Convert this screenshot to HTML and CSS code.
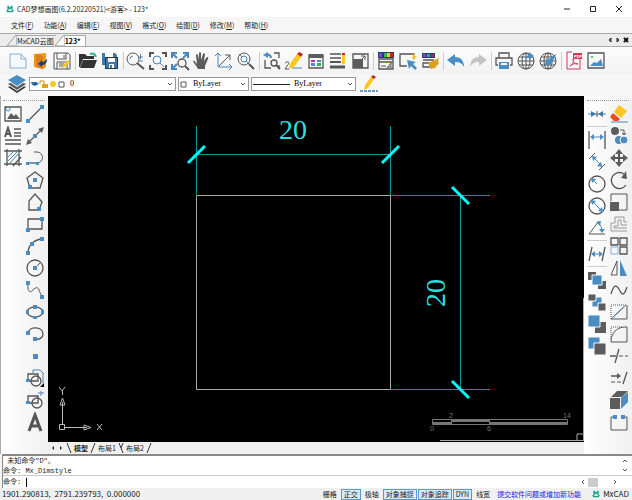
FILE: index.html
```html
<!DOCTYPE html>
<html lang="zh-CN">
<head>
  <meta charset="UTF-8">
  <meta name="viewport" content="width=device-width, initial-scale=1.0">
  <title>CAD梦想画图</title>
  <link rel="stylesheet" href="styles.css">
</head>
<body>
  <div class="app">
    <header class="titlebar">
      <svg class="logo" viewBox="0 0 12 12"><path d="M2 1l2 0 2 3 2-3h2v6H8V5L6 7 4 5v3H2zM0 8h3l1 1h4l2-2 2 1-2 3H2z"/></svg>
      <span class="title">CAD梦想画图(6.2.20220521)&lt;游客&gt; - 123*</span>
      <button class="window-button" aria-label="最小化"><svg viewBox="0 0 8 8"><path d="M1 4h6"/></svg></button>
      <button class="window-button" aria-label="最大化"><svg viewBox="0 0 8 8"><path d="M1.5 1.5h5v5h-5z"/></svg></button>
      <button class="window-button" aria-label="关闭"><svg viewBox="0 0 8 8"><path d="M1 1l6 6M7 1L1 7"/></svg></button>
    </header>

    <nav class="menubar">
      <button>文件(<u>F</u>)</button>
      <button>功能(<u>A</u>)</button>
      <button>编辑(<u>E</u>)</button>
      <button>视图(<u>V</u>)</button>
      <button>格式(<u>O</u>)</button>
      <button>绘图(<u>D</u>)</button>
      <button>修改(<u>M</u>)</button>
      <button>帮助(<u>H</u>)</button>
    </nav>

    <div class="doc-tabs">
      <svg class="slant" viewBox="0 0 10 12"><path d="M0 12L8 2l2-1v11z"/></svg>
      <button class="doc-tab">MxCAD云图</button>
      <svg class="slant active" viewBox="0 0 10 12"><path d="M0 12L8 2l2-1v11z"/></svg>
      <button class="doc-tab active">123*</button>
      <div class="doc-nav">
        <button aria-label="上一个"><svg viewBox="0 0 6 6"><path d="M4 1v4L2 3z"/></svg></button>
        <button aria-label="下一个"><svg viewBox="0 0 6 6"><path d="M2 1v4l2-2z"/></svg></button>
        <button aria-label="关闭文档"><svg viewBox="0 0 6 6"><path class="bold" d="M1 1l4 4M5 1L1 5"/></svg></button>
      </div>
    </div>

    <div class="toolbar main-tools">
      <button class="tool" aria-label="新建"><svg viewBox="0 0 20 20"><path class="pale" d="M2 3h11l5 5v9H2zM13 3v5h5"/></svg></button>
      <button class="tool" aria-label="打开图库"><svg viewBox="0 0 20 20"><path class="orange" d="M4 3l12-1v14l-3 2-9-2z"/><path class="brown" d="M6 3l7 2v13l-7-2z"/><path class="navy" d="M17 8c0 4-2 6-5 6v2l-4-3 4-4v2c2 0 3-1 5-3z"/></svg></button>
      <button class="tool" aria-label="另存为"><svg viewBox="0 0 20 20"><path d="M2 2h14l2 2v14H2zM5 2v6h9V2M5 18v-7h10v7M12 4v3M7 13h5M7 15h4"/><path class="yellow" d="M10 17l1-3 5-5 2 2-5 5z"/></svg></button>
      <i class="sep"></i>
      <button class="tool" aria-label="打开"><svg viewBox="0 0 20 20"><path class="dark" d="M1 3h6l2 2h7v3H5l-3 8H1zM5 9h14l-3 8H2z"/><path class="green-line" d="M12 3c3-1 5 0 6 3"/></svg></button>
      <button class="tool" aria-label="保存"><svg viewBox="0 0 20 20"><path class="steel" d="M2 2h13l2 2v10H2z"/><path class="white" d="M5 2h8v4H5z"/><path class="dark" d="M5 6h13v12H5z"/><path class="steel" d="M6 7h11v10H6z"/><path class="white" d="M8 7h7v4H8zM9 13h5v4H9z"/><path class="steel" d="M10 14h2v3h-2z"/></svg></button>
      <i class="sep"></i>
      <button class="tool" aria-label="缩放"><svg viewBox="0 0 20 20"><circle cx="7" cy="8" r="6"/><path class="thick" d="M11 12l7 6"/><path class="blue-line" d="M12 6h5M14.500 3v5M13 10h4M4 8a3 3 0 0 1 3-3"/></svg></button>
      <button class="tool" aria-label="窗口缩放"><svg viewBox="0 0 20 20"><path class="thick" d="M2 6V2h4M14 2h4v4M18 14v4h-4M6 18H2v-4"/><circle class="blue-line" cx="9" cy="9" r="4"/><path class="blue-line" d="M12 12l4 4"/></svg></button>
      <button class="tool" aria-label="范围缩放"><svg viewBox="0 0 20 20"><path class="blue-line fatter" d="M2 7V2h5M2 2l5 5M13 2h5v5M18 2l-5 5M2 13v5h5M2 18l5-5"/><circle class="heavy" cx="12" cy="12" r="4"/><path class="thick" d="M15 15l4 4"/></svg></button>
      <button class="tool" aria-label="平移"><svg viewBox="0 0 20 20"><path class="gray" d="M6 18c-1-3-4-5-5-8 1-1 2 0 4 3L4 4c0-1 2-1 2 0l1 5V2c0-1 2-1 2 0v7l2-6c0-1 2-1 2 0l-1 7 3-4c1 0 2 0 1 2l-3 7v3z"/></svg></button>
      <button class="tool" aria-label="坐标"><svg viewBox="0 0 20 20"><path class="blue-line" d="M4 3v13h13M1 5l3-3 3 3M15 13l3 3-3 3"/><path d="M5 15L16 4M11 4h5v5"/></svg></button>
      <button class="tool" aria-label="实时缩放"><svg viewBox="0 0 20 20"><circle cx="8" cy="8" r="6"/><circle class="blue-line" cx="8" cy="8" r="3"/><path class="blue-line" d="M3 3l3 3M10 10l3 3"/><path class="thick" d="M13 13l5 5"/></svg></button>
      <i class="sep"></i>
      <button class="tool" aria-label="查找"><svg viewBox="0 0 20 20"><path class="heavy" d="M3 9v8h6M12 2h5v5M17 14v4"/><circle class="heavy" cx="12" cy="12" r="3"/><path class="thick" d="M14 14l4 4"/><path class="blue-line fatter" d="M9 7c0-3-3-4-6-3"/><path class="blue" d="M1 4l5-3v6z"/></svg></button>
      <button class="tool" aria-label="草图"><svg viewBox="0 0 20 20"><path d="M1 12c4-3 5 0 2 3l-2 3h4"/><path class="blue-line" d="M8 17h10"/><path class="yellow" d="M6 13L13 3l4 3-7 10-5 2z"/><path class="red" d="M13 3l2-2 4 2-2 3z"/></svg></button>
      <button class="tool" aria-label="图层"><svg viewBox="0 0 20 20"><path class="heavy" d="M3 4h14v13H3z"/><path class="gray" d="M3 3h14v4H3z"/><path class="purple" d="M5 9h4v2H5z"/><path class="blue" d="M5 12h4v3H5zM11 9h4v2h-4z"/><path class="green" d="M11 12h4v3h-4z"/></svg></button>
      <button class="tool" aria-label="线宽"><svg viewBox="0 0 20 20"><path class="heavy" d="M2 3h11M2 7h11"/><path class="thick" d="M2 11h11"/><path class="fattest" d="M2 16h15"/><path class="yellow" d="M14 4h3v8l-2 2-1-2z"/><path class="red" d="M14 2h3v2h-3z"/></svg></button>
      <button class="tool" aria-label="比例"><svg viewBox="0 0 20 20"><path class="heavy" d="M3 3h15v14H3z"/><path class="gray" d="M3 8h10v9H3z"/><path d="M10 10l5-5M11 5h4v4"/></svg></button>
      <i class="sep"></i>
      <button class="tool" aria-label="颜色"><svg viewBox="0 0 20 20"><path class="navy" d="M2 1h16v6H2z"/><path class="purple" d="M3 2h3v4H3z"/><path class="red" d="M14 2h3v4h-3z"/><path class="green" d="M8 2h3v4H8z"/><path class="yellow" d="M11 2h3v4h-3z"/><path class="heavy" d="M3 8h14v10H3zM3 11h14"/><path d="M5 15h5M11 17l4-5v5M12 16h3"/></svg></button>
      <button class="tool" aria-label="选择"><svg viewBox="0 0 20 20"><path class="heavy" d="M9 15H2V3h14v5"/><path class="blue" d="M9 9l9 2-3 2 4 4-2 2-4-4-2 3z"/><path class="yellow" d="M16 2l-2 5h2l-1 3 4-5h-2z"/></svg></button>
      <button class="tool" aria-label="格式刷"><svg viewBox="0 0 20 20"><path class="navy" d="M2 2h13v5H2z"/><path class="purple" d="M3 3h3v3H3z"/><path class="green" d="M7 3h3v3H7z"/><path class="red" d="M11 3h3v3h-3z"/><path class="heavy" d="M3 9h11M3 12h8v4H3z"/><path class="gold" d="M8 12l7-3 4-2-1 3 1 2-4 5-4 1z"/></svg></button>
      <i class="sep"></i>
      <button class="tool" aria-label="撤销"><svg viewBox="0 0 20 20"><path class="blue" d="M1 9l8-6v3c6 0 9 4 9 10-2-4-5-5-9-5v4z"/></svg></button>
      <button class="tool" aria-label="重做"><svg viewBox="0 0 20 20"><path class="light" d="M19 9l-8-6v3c-6 0-9 4-9 10 2-4 5-5 9-5v4z"/></svg></button>
      <i class="sep"></i>
      <button class="tool" aria-label="打印"><svg viewBox="0 0 20 20"><path class="heavy" d="M5 7V2h10v5M4 14H2V7h16v7h-2"/><path class="blue" d="M5 11h10v7H5z"/><path class="white" d="M7 12h6v2H7z"/></svg></button>
      <button class="tool" aria-label="发布网页"><svg viewBox="0 0 20 20"><circle cx="10" cy="10" r="8"/><ellipse cx="10" cy="10" rx="4" ry="8"/><path d="M10 2v16M2 10h16M3 6h14M3 14h14"/><path class="blue" d="M9 8c1-3 3-4 4-4V1l5 4-5 4V7c-2 0-3 0-4 1z"/></svg></button>
      <button class="tool" aria-label="打开网页"><svg viewBox="0 0 20 20"><circle cx="10" cy="10" r="8"/><ellipse cx="10" cy="10" rx="4" ry="8"/><path d="M10 2v16M2 10h16M3 6h14M3 14h14"/><path class="blue" d="M18 3c-1 5-3 6-5 8l2 2-8 1 1-7 2 2c2-2 4-4 8-6z"/></svg></button>
      <i class="sep"></i>
      <button class="tool" aria-label="导出PDF"><svg viewBox="0 0 20 20"><path class="red-line" d="M8 1H3v17h13V8M6 15c3-2 4-5 3-7 0 4 3 5 5 5-3-1-6 0-8 2"/><path class="crimson" d="M9 2h9v6H9z"/><text class="pdf" x="10" y="7">PDF</text></svg></button>
      <button class="tool" aria-label="导出图片"><svg viewBox="0 0 20 20"><path class="heavy" d="M2 2h16v15H2z"/><path class="blue" d="M4 15l4-4 3 1 4-4 2 7z"/><circle class="green" cx="6" cy="6" r="1"/></svg></button>
    </div>

    <div class="toolbar property-tools">
      <button class="tool" aria-label="图层管理"><svg viewBox="0 0 20 20"><path class="dark" d="M1 13l9-4 9 4-9 6z"/><path class="white" d="M1 11l9-4 9 4-9 6z"/><path class="gray" d="M1 10l9-4 9 4-9 6z"/><path class="white" d="M1 7l9-5 9 5-9 6z"/><path class="blue" d="M1 6l9-5 9 5-9 6z"/></svg></button>
      <label class="combo layer">
        <svg class="layer-icons" viewBox="0 0 36 12"><path class="steel" d="M1 4h6l2 2-4 2-3-1z"/><circle class="navy" cx="5" cy="6" r="1"/><path class="gold-line" d="M10 6V3h4v4"/><path class="gold" d="M12 6h6v4h-6z"/><circle class="yellow" cx="23" cy="6" r="3"/><path d="M29 4h5v5h-5z"/></svg>
        <select aria-label="图层"><option>0</option></select>
        <svg class="chevron" viewBox="0 0 8 6"><path d="M2 2l2 2 2-2"/></svg>
      </label>
      <label class="combo color">
        <svg class="swatch" viewBox="0 0 10 12"><path d="M2 4h5v5H2z"/></svg>
        <select aria-label="颜色"><option>ByLayer</option></select>
        <svg class="chevron" viewBox="0 0 8 6"><path d="M2 2l2 2 2-2"/></svg>
      </label>
      <label class="combo linetype">
        <span class="line-sample"></span>
        <select aria-label="线型"><option>ByLayer</option></select>
        <svg class="chevron" viewBox="0 0 8 6"><path d="M2 2l2 2 2-2"/></svg>
      </label>
      <button class="tool" aria-label="线型样式"><svg viewBox="0 0 20 20"><path class="yellow" d="M7 11l6-8 3 2-6 9-4 2z"/><path class="red" d="M13 3l2-2 3 2-2 2z"/><path class="dash-line" d="M2 17h18"/></svg></button>
    </div>

    <main class="workspace">
      <aside class="palette">
        <div class="grip"></div>
        <div class="palette-cols">
          <div class="palette-col">
            <button class="tool" aria-label="图像"><svg viewBox="0 0 20 20"><path class="heavy" d="M2 3h16v14H2z"/><path class="gray" d="M4 15l4-6 3 3 2-2 4 5z"/><circle class="blue-line" cx="5" cy="5" r="2"/></svg></button>
            <button class="tool" aria-label="多行文字"><svg viewBox="0 0 20 20"><path class="thick" d="M2 11L5 2l3 9M3 8h4"/><path class="heavy" d="M11 3h7M11 7h7M11 10h7M2 14h16M2 18h16"/></svg></button>
            <button class="tool" aria-label="填充"><svg viewBox="0 0 20 20"><path class="heavy" d="M4 1v17M16 1v17M1 3h18M1 16h18M10 18l8-9"/><path class="blue-line" d="M5 9l5-5M5 13l9-9M7 15l8-9"/></svg></button>
          </div>
          <div class="palette-col">
            <button class="tool" aria-label="直线"><svg viewBox="0 0 20 20"><path class="heavy" d="M3 17L17 3"/><path class="blue" d="M1 15h4v4H1zM15 1h4v4h-4z"/></svg></button>
            <button class="tool" aria-label="构造线"><svg viewBox="0 0 20 20"><path class="heavy" d="M3 17L17 3"/><path class="gray" d="M1 19l2-6 4 4zM19 1l-6 2 4 4z"/><path class="blue" d="M8 8h4v4H8z"/></svg></button>
            <button class="tool" aria-label="多段线"><svg viewBox="0 0 20 20"><path d="M3 15h9a5 5 0 0 0 0-11H9"/><path class="blue-line" d="M3 15h9"/><path class="blue" d="M1 14h3v3H1zM11 14h3v3h-3z"/></svg></button>
            <button class="tool" aria-label="正多边形"><svg viewBox="0 0 20 20"><path class="heavy" d="M10 2l8 6-3 10H5L2 8z"/><path class="blue" d="M8 8h4v4H8zM3 15h4v4H3z"/></svg></button>
            <button class="tool" aria-label="多边形"><svg viewBox="0 0 20 20"><path class="heavy" d="M4 18V9l6-7 7 8-3 8z"/><path class="blue" d="M12 15h4v4h-4z"/></svg></button>
            <button class="tool" aria-label="矩形"><svg viewBox="0 0 20 20"><path class="heavy" d="M3 5h14v10H3z"/><path class="blue" d="M1 14h4v4H1zM15 3h4v4h-4z"/></svg></button>
            <button class="tool" aria-label="圆弧"><svg viewBox="0 0 20 20"><path class="heavy" d="M3 17C3 10 8 4 17 3"/><path class="blue" d="M1 15h4v4H1zM5 6h4v4H5zM15 1h4v4h-4z"/></svg></button>
            <button class="tool" aria-label="圆"><svg viewBox="0 0 20 20"><circle class="heavy" cx="10" cy="10" r="8"/><path d="M10 10l5-5"/><path class="blue" d="M8 8h4v4H8z"/></svg></button>
            <button class="tool" aria-label="样条曲线"><svg viewBox="0 0 20 20"><path d="M3 3c-1 8 2 11 5 7s6-2 6 0 2 3 3 7"/><path class="blue" d="M1 1h4v4H1zM15 15h4v4h-4z"/></svg></button>
            <button class="tool" aria-label="椭圆"><svg viewBox="0 0 20 20"><ellipse class="heavy" cx="10" cy="10" rx="8" ry="5"/><path class="blue" d="M8 3h4v4H8zM1 8h3v4H1zM16 8h3v4h-3zM8 14h4v3H8z"/></svg></button>
            <button class="tool" aria-label="椭圆弧"><svg viewBox="0 0 20 20"><path class="heavy" d="M3 9c1-7 15-7 15 1 0 4-4 6-8 5"/><path class="blue" d="M1 7h4v4H1zM8 13h4v4H8z"/></svg></button>
            <button class="tool" aria-label="点"><svg viewBox="0 0 20 20"><path class="blue" d="M8 8h5v5H8z"/></svg></button>
            <button class="tool" aria-label="创建块"><svg viewBox="0 0 20 20"><path class="blue-line" d="M8 5V2h7l3 3v10"/><path class="heavy" d="M3 12V6h10v7H3"/><circle class="heavy" cx="11" cy="13" r="5"/><path class="blue" d="M1 11h4v3H1z"/><path class="black" d="M15 19l4-4v4z"/></svg></button>
            <button class="tool" aria-label="插入块"><svg viewBox="0 0 20 20"><path class="heavy" d="M3 12V6h10v7H3"/><circle class="heavy" cx="12" cy="13" r="5"/><path class="blue" d="M1 11h4v3H1z"/><path class="blue-line" d="M13 3h6M16 1v5"/></svg></button>
            <button class="tool" aria-label="文字"><svg viewBox="0 0 20 20"><path class="fattest" d="M4 19L10 3l6 16M6 14h8"/></svg></button>
          </div>
        </div>
      </aside>

      <section class="drawing">
        <svg class="canvas" viewBox="0 0 536 346">
          <path class="shape" d="M148.500 99.500h194v194h-194z"/>
          <path class="dim" d="M148.500 30v69M342.500 30v69M148 58.500h194M343 99.500h99M343 293.500h99M412.500 99v194"/>
          <path class="tick" d="M140 67l17-17M334 67l17-17M404 91l17 17M404 285l17 17"/>
          <text class="dim-text" x="231" y="43">20</text>
          <text class="dim-text" transform="translate(397 211) rotate(-90)">20</text>

          <path class="ucs" d="M11.500 328.500h5v5h-5zM14.500 328v-22M17 331.500h22M12 309l2.500-7 2.500 7zM36 329l7 2.500-7 2.500z"/>
          <path class="ucs" d="M11 291l3 4 3-4M14.500 295v4M49 328l5 6M54 328l-5 6"/>

          <path class="ruler-line" d="M384.500 323.500h135v5h-135zM403.500 323v5M441.500 323v5"/>
          <path class="ruler-fill" d="M384 326h19v2h-19zM403 324h38v2h-38zM441 326h78v2h-78z"/>
          <text class="ruler-text" x="403" y="322">2</text>
          <text class="ruler-text" x="519" y="322">14</text>
          <text class="ruler-text" x="384" y="335">0</text>
          <text class="ruler-text" x="441" y="335">6</text>
          <path class="frame" d="M535.500 202v143M392 344.500h144M529 344v-6h6"/>
        </svg>
        <div class="layout-tabs">
          <button aria-label="向左"><svg viewBox="0 0 6 6"><path d="M4 1v4L2 3z"/></svg></button>
          <button aria-label="向右"><svg viewBox="0 0 6 6"><path d="M2 1v4l2-2z"/></svg></button>
          <svg class="divider" viewBox="0 0 6 10"><path d="M1 0l4 10"/></svg>
          <button class="current">模型</button>
          <svg class="divider" viewBox="0 0 6 10"><path d="M5 0L1 10"/></svg>
          <button>布局1</button>
          <svg class="divider" viewBox="0 0 6 10"><path d="M1 0l4 10M5 0L3 5"/></svg>
          <button>布局2</button>
          <svg class="divider" viewBox="0 0 6 10"><path d="M5 0L1 10"/></svg>
        </div>
      </section>

      <aside class="palette right">
        <div class="grip"></div>
        <div class="palette-cols">
          <div class="palette-col">
            <button class="tool" aria-label="打断"><svg viewBox="0 0 20 20"><path class="blue-line" d="M1 10h18"/><path d="M10 7v6"/><path class="steel" d="M9 10L4 7v6zM11 10l5-3v6z"/></svg></button>
            <i class="rule"></i>
            <button class="tool" aria-label="线性标注"><svg viewBox="0 0 20 20"><path class="heavy" d="M2 1v18M18 1v18"/><path class="blue-line" d="M4 7h12"/><path class="blue" d="M3 7l4-3v6zM17 7l-4-3v6z"/></svg></button>
            <button class="tool" aria-label="对齐标注"><svg viewBox="0 0 20 20"><path d="M2 7l6-6M12 18l6-6"/><path class="blue-line" d="M6 5l8 8"/><path class="blue" d="M5 4l5 1-4 4zM15 15l-1-5-4 4z"/></svg></button>
            <button class="tool" aria-label="半径标注"><svg viewBox="0 0 20 20"><circle class="heavy" cx="10" cy="10" r="8"/><path class="blue-line" d="M5 5l5 5"/><path class="blue" d="M4 4l5 1-4 4z"/></svg></button>
            <button class="tool" aria-label="直径标注"><svg viewBox="0 0 20 20"><circle class="heavy" cx="10" cy="10" r="8"/><path class="blue-line" d="M5 5l10 10"/><path class="blue" d="M4 4l5 1-4 4zM16 16l-5-1 4-4z"/></svg></button>
            <button class="tool" aria-label="角度标注"><svg viewBox="0 0 20 20"><path d="M12 3L2 16h16"/><path class="blue-line" d="M11 5c3 2 4 5 4 9"/><path class="blue" d="M9 4l5-1-1 5zM12 11h6l-3 4z"/></svg></button>
            <i class="rule"></i>
            <button class="tool" aria-label="标注样式"><svg viewBox="0 0 20 20"><path class="heavy" d="M5 3L2 17M18 3l-3 14"/><path class="blue-line" d="M5 10h10"/><path class="blue" d="M4 10l4-3v6zM16 10l-4-3v6z"/></svg></button>
            <i class="rule"></i>
            <button class="tool" aria-label="前置"><svg viewBox="0 0 20 20"><path class="gray" d="M1 2h8v8H1zM11 11h8v8h-8z"/><path class="edge" d="M5 5h10v10H5z"/></svg></button>
            <button class="tool" aria-label="后置"><svg viewBox="0 0 20 20"><path class="edge" d="M5 5h10v10H5z"/><path class="gray-edge" d="M1 2h8v7H1zM11 11h8v8h-8z"/></svg></button>
            <button class="tool" aria-label="置于对象之上"><svg viewBox="0 0 20 20"><path class="gray" d="M8 8h11v11H8z"/><path class="edge" d="M1 1h12v12H1z"/></svg></button>
            <button class="tool" aria-label="置于对象之下"><svg viewBox="0 0 20 20"><path class="edge" d="M1 1h12v12H1z"/><path class="gray-edge" d="M7 7h12v12H7z"/></svg></button>
          </div>
          <div class="palette-col">
            <button class="tool" aria-label="删除"><svg viewBox="0 0 20 20"><path class="yellow" d="M10 1l8 6-6 7-7-6z"/><path class="rust" d="M4 9l7 6-2 2H5l-4-4z"/><path class="blue-line" d="M2 18h17"/></svg></button>
            <button class="tool" aria-label="复制"><svg viewBox="0 0 20 20"><circle class="gray" cx="6" cy="5" r="4"/><path d="M11 4h4v5M13 7l2 2 2-2"/><circle class="blue" cx="10" cy="14" r="4"/><circle class="edge" cx="15" cy="14" r="4"/></svg></button>
            <button class="tool" aria-label="移动"><svg viewBox="0 0 20 20"><path class="thick" d="M10 3v14M3 10h14"/><path class="gray" d="M10 1l4 5H6zM10 19l-4-5h8zM1 10l5-4v8zM19 10l-5 4V6z"/></svg></button>
            <button class="tool" aria-label="旋转"><svg viewBox="0 0 20 20"><path class="heavy" d="M15 4a8 8 0 1 0 2 11"/><path class="gray" d="M12 8l5-7 1 8z"/></svg></button>
            <button class="tool" aria-label="缩放对象"><svg viewBox="0 0 20 20"><path d="M2 9V2h16v16h-8"/><path class="gray" d="M1 10h9v9H1z"/></svg></button>
            <button class="tool" aria-label="偏移"><svg viewBox="0 0 20 20"><path class="light-line" d="M2 17V9h4V3h9v5h3M18 17H2M5 14v-2h4V6h3v5h6M5 14h13"/></svg></button>
            <button class="tool" aria-label="阵列"><svg viewBox="0 0 20 20"><path class="heavy" d="M2 2h7v7H2zM11 2h7v7h-7zM11 11h7v7h-7z"/><path class="pale" d="M2 11h7v7H2z"/></svg></button>
            <button class="tool" aria-label="镜像"><svg viewBox="0 0 20 20"><path d="M8 3v14H2z"/><path class="blue" d="M11 2l7 16h-7z"/></svg></button>
            <button class="tool" aria-label="曲线"><svg viewBox="0 0 20 20"><path class="heavy" d="M2 14C5 3 8 5 11 11s5 2 7-4"/></svg></button>
            <button class="tool" aria-label="倒角"><svg viewBox="0 0 20 20"><path d="M2 17h16V3M2 17L17 3"/><path class="dotted" d="M2 17V3h16"/><path class="blue-line" d="M3 16L17 3"/></svg></button>
            <button class="tool" aria-label="圆角"><svg viewBox="0 0 20 20"><path d="M2 16v2h16V3h-3C7 4 3 9 2 16"/><path class="dotted" d="M2 15V3h12"/></svg></button>
            <button class="tool" aria-label="修剪"><svg viewBox="0 0 20 20"><path class="heavy" d="M1 10h6M10 3L6 17"/><path class="dashed" d="M10 10h9"/></svg></button>
            <button class="tool" aria-label="延伸"><svg viewBox="0 0 20 20"><path class="heavy" d="M2 8h7M18 4l-4 12"/><path class="gray" d="M8 5l4 3-4 3z"/><path class="dashed" d="M2 14h11"/></svg></button>
            <button class="tool" aria-label="分解"><svg viewBox="0 0 20 20"><path class="gray" d="M1 8h10v11H1zM8 1h11l-6 6H2z"/><path class="blue" d="M12 8l7-6v10l-7 7z"/></svg></button>
            <button class="tool" aria-label="打断于点"><svg viewBox="0 0 20 20"><path d="M7 5H2v13h16V5h-5"/><path class="blue" d="M4 3h4v4H4zM12 3h4v4h-4z"/></svg></button>
          </div>
        </div>
      </aside>
    </main>

    <section class="command">
      <div class="history">
        <div class="history-text">
          <p>&nbsp;未知命令"D"。</p>
          <p>命令: Mx_Dimstyle</p>
        </div>
        <div class="v-scroll">
          <button aria-label="向上滚动"><svg viewBox="0 0 6 6"><path d="M1 4l2-2 2 2"/></svg></button>
          <button aria-label="向下滚动"><svg viewBox="0 0 6 6"><path d="M1 2l2 2 2-2"/></svg></button>
        </div>
      </div>
      <div class="prompt">
        <label for="command-input">命令:</label>
        <span class="caret"></span>
        <input id="command-input" type="text">
        <div class="h-scroll">
          <button aria-label="向左滚动"><svg viewBox="0 0 6 6"><path d="M4 1L2 3l2 2"/></svg></button>
          <i class="thumb"></i>
          <button aria-label="向右滚动"><svg viewBox="0 0 6 6"><path d="M2 1l2 2-2 2"/></svg></button>
        </div>
      </div>
    </section>

    <footer class="statusbar">
      <span class="coords">1901.290813,&nbsp; 2791.239793,&nbsp; 0.000000</span>
      <button>栅格</button>
      <button class="on">正交</button>
      <button>极轴</button>
      <button class="on">对象捕捉</button>
      <button class="on">对象追踪</button>
      <button class="on">DYN</button>
      <button>线宽</button>
      <a href="#">提交软件问题或增加新功能</a>
      <svg class="logo" viewBox="0 0 12 12"><path d="M2 1l2 0 2 3 2-3h2v6H8V5L6 7 4 5v3H2zM0 8h3l1 1h4l2-2 2 1-2 3H2z"/></svg>
      <span class="brand">MxCAD</span>
    </footer>
  </div>
</body>
</html>
```
FILE: styles.css
```css
* {
  box-sizing: border-box;
}
body {
  margin: 0;
  font-family: "Noto Sans CJK SC", "Noto Sans", sans-serif;
  font-size: 7px;
  line-height: 10px;
  color: #222;
  background: #f5f5f5;
}
button, select, input {
  padding: 0;
  border: 0;
  background: none;
  font: inherit;
  color: inherit;
  white-space: nowrap;
}
svg {
  display: block;
  fill: none;
  stroke: #555;
  stroke-width: 1;
}
p {
  margin: 0;
}
.app {
  display: flex;
  flex-direction: column;
  height: 100vh;
  overflow: hidden;
}

/* title and menu */
.titlebar {
  display: flex;
  align-items: center;
  height: 17px;
  padding: 0 3px 0 6px;
  background: #fff;
}
.logo {
  width: 8px;
  height: 8px;
  fill: #12a08a;
  stroke: none;
}
.title {
  flex: 1;
  margin-left: 3px;
}
.window-button {
  width: 20px;
  margin-left: 6px;
}
.window-button svg {
  width: 8px;
  height: 8px;
  margin: 0 auto;
  stroke: #222;
}
.menubar {
  display: flex;
  gap: 10px;
  align-items: center;
  height: 16px;
  padding-left: 11px;
  background: #f6f6f6;
}

/* document tabs */
.doc-tabs {
  display: flex;
  align-items: flex-end;
  height: 14px;
  padding: 0 3px 0 7px;
  background: #ececec;
  border-top: 1px solid #aaa;
  border-bottom: 1px solid #aaa;
}
.slant {
  width: 10px;
  height: 12px;
  fill: #ececec;
  stroke: #999;
}
.slant.active {
  fill: #fff;
  margin-left: -1px;
}
.doc-tab {
  height: 11px;
  padding-right: 2px;
  border-top: 1px solid #aaa;
}
.doc-tab.active {
  padding: 0 4px 0 0;
  background: #fff;
  border-right: 1px solid #aaa;
  font-weight: bold;
  color: #000;
}
.doc-nav {
  display: flex;
  gap: 2px;
  margin-left: auto;
  align-self: center;
}
.doc-nav svg {
  width: 6px;
  height: 6px;
  stroke: #111;
}
.doc-nav .bold {
  stroke-width: 2;
}

/* toolbars */
.toolbar {
  display: flex;
  align-items: center;
  background: #f7f7f7;
}
.main-tools {
  gap: 2px;
  height: 27px;
  padding-left: 8px;
  background: linear-gradient(#fcfcfc, #f2f2f2);
}
.sep {
  width: 2px;
  height: 18px;
  border-right: 1px solid #ccc;
}
.tool {
  flex: none;
  width: 20px;
  height: 20px;
}
.tool svg {
  width: 20px;
  height: 20px;
}
.property-tools {
  gap: 2px;
  height: 22px;
  padding: 0 0 2px 7px;
}
.combo {
  display: flex;
  align-items: center;
  height: 14px;
  background: #fff;
  border: 1px solid #999;
}
.combo select {
  flex: 1;
  min-width: 0;
  appearance: none;
  font-family: "Liberation Serif", serif;
  font-size: 8px;
  line-height: 10px;
  color: #000;
}
.layer {
  width: 147px;
}
.color {
  width: 71px;
}
.linetype {
  width: 105px;
}
.layer-icons {
  width: 36px;
  height: 12px;
  margin-right: 4px;
}
.swatch {
  width: 10px;
  height: 12px;
  margin-right: 4px;
}
.line-sample {
  width: 37px;
  margin: 0 4px 0 1px;
  border-top: 1px solid #222;
}
.chevron {
  width: 8px;
  height: 6px;
  margin-right: 1px;
}

/* icon inks */
svg .heavy { stroke-width: 1.3; }
svg .thick { stroke-width: 2; }
svg .fatter { stroke-width: 2; }
svg .fattest { stroke-width: 3; }
svg .pale { stroke: #8ab0d0; fill: #f4f8fc; }
svg .blue-line { stroke: #4a86b8; }
svg .green-line { stroke: #2fb58a; stroke-width: 2; }
svg .red-line { stroke: #d5355a; }
svg .gold-line { stroke: #c89020; }
svg .light-line { stroke: #999; }
svg .dash-line { stroke: #3878b8; stroke-width: 1.5; stroke-dasharray: 3 1; }
svg .dotted { stroke-dasharray: 1 1; }
svg .dashed { stroke-dasharray: 4 2; }
svg .blue { fill: #4a8cc4; stroke: none; }
svg .steel { fill: #3f78a8; stroke: none; }
svg .navy { fill: #1b3f78; stroke: none; }
svg .gray { fill: #5c5c5c; stroke: none; }
svg .dark { fill: #333; stroke: none; }
svg .black { fill: #000; stroke: none; }
svg .light { fill: #c4c4c4; stroke: none; }
svg .white { fill: #fff; stroke: none; }
svg .orange { fill: #f0981c; stroke: none; }
svg .brown { fill: #d98018; stroke: none; }
svg .yellow { fill: #f8c820; stroke: none; }
svg .gold { fill: #dca21c; stroke: none; }
svg .red { fill: #c02820; stroke: none; }
svg .rust { fill: #ee4c20; stroke: none; }
svg .crimson { fill: #d5355a; stroke: none; }
svg .purple { fill: #a030d8; stroke: none; }
svg .green { fill: #30b850; stroke: none; }
svg .edge { fill: #4a8cc4; stroke: #f7f7f7; }
svg .gray-edge { fill: #5c5c5c; stroke: #f7f7f7; }
svg .pdf {
  font: bold 4px "Liberation Sans", sans-serif;
  fill: #fff;
  stroke: none;
}

/* workspace */
.workspace {
  display: flex;
  flex: 1;
  min-height: 0;
}
.palette {
  padding: 4px 3px 0 2px;
  background: linear-gradient(90deg, #fff, #f0f0f0);
  border-left: 1px solid #aaa;
}
.palette.right {
  padding: 4px 3px 0;
  border-left: 0;
}
.grip {
  height: 4px;
  border-top: 1px dotted #999;
}
.palette-cols {
  display: flex;
  gap: 2px;
}
.palette-col {
  display: flex;
  flex-direction: column;
  gap: 2px;
  width: 20px;
}
.rule {
  height: 2px;
  border-top: 1px solid #ccc;
}
.drawing {
  display: flex;
  flex: 1;
  flex-direction: column;
  min-width: 0;
}
.canvas {
  flex: 1;
  width: 100%;
  min-height: 0;
  background: #000;
}
.canvas .shape { stroke: #aaa; }
.canvas .dim { stroke: #0a9a9a; }
.canvas .tick { stroke: #0ff; stroke-width: 3; }
.canvas .dim-text {
  font: 28px "Liberation Serif", serif;
  fill: #2ce0e0;
  stroke: none;
}
.canvas .ucs { stroke: #bbb; }
.canvas .ruler-line { stroke: #777; }
.canvas .ruler-fill { fill: #777; stroke: none; }
.canvas .ruler-text {
  font: 7px "Liberation Sans", sans-serif;
  fill: #777;
  stroke: none;
  text-anchor: middle;
}
.canvas .frame { stroke: #aaa; }

.layout-tabs {
  display: flex;
  gap: 2px;
  align-items: center;
  height: 12px;
  padding-left: 2px;
  background: #f0f0f0;
}
.layout-tabs button svg {
  width: 6px;
  height: 6px;
  fill: #222;
  stroke: none;
}
.layout-tabs .divider {
  width: 6px;
  height: 10px;
  stroke: #333;
}
.current {
  font-weight: bold;
}

/* command line */
.command {
  margin-left: 2px;
  background: #fff;
  border-top: 2px solid #888;
  border-left: 1px solid #888;
  font-family: "Liberation Mono", "Noto Sans CJK SC", monospace;
}
.history {
  display: flex;
  justify-content: space-between;
  height: 20px;
  padding-right: 4px;
  border-bottom: 1px solid #ccc;
}
.v-scroll {
  display: flex;
  flex-direction: column;
  justify-content: space-around;
}
.v-scroll svg, .h-scroll svg {
  width: 6px;
  height: 6px;
}
.prompt {
  display: flex;
  align-items: center;
  height: 12px;
}
.caret {
  width: 1px;
  height: 9px;
  margin-left: 5px;
  background: #000;
}
.prompt input {
  flex: 1;
  min-width: 0;
  height: 10px;
  outline: none;
}
.h-scroll {
  display: flex;
  gap: 2px;
  align-items: center;
  padding-right: 14px;
}
.thumb {
  width: 10px;
  height: 9px;
  margin-right: 12px;
  background: #ccc;
}

/* status bar */
.statusbar {
  display: flex;
  gap: 1px;
  align-items: center;
  height: 12px;
  padding: 0 3px 0 2px;
  background: #f0f0f0;
}
.coords {
  flex: 1;
  font-size: 8px;
}
.statusbar button {
  height: 11px;
  padding: 0 2px;
  border: 1px solid transparent;
  line-height: 9px;
}
.statusbar .on {
  background: #d8eaf8;
  border-color: #5a9ad0;
}
.statusbar a {
  margin: 0 10px 0 3px;
  color: #2020e8;
  text-decoration: none;
}
.brand {
  margin-left: 2px;
  font-size: 8px;
}
```
